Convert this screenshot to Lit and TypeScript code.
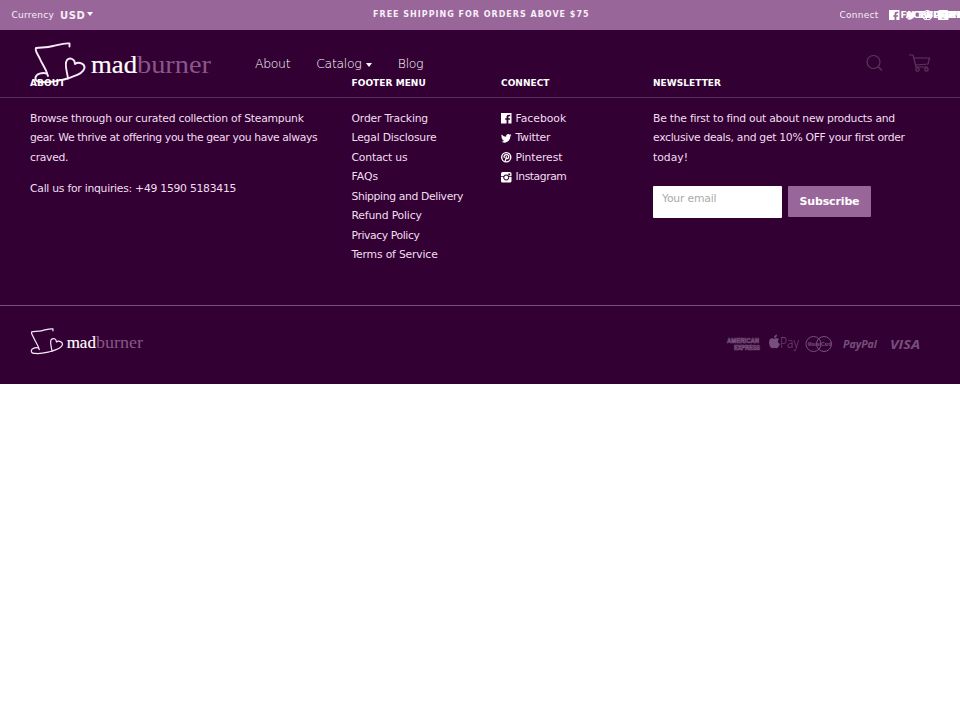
import { LitElement, html, css, svg } from "lit";
import { customElement } from "lit/decorators.js";
import { styleMap } from "lit/directives/style-map.js";

const facebook = svg`<path fill-rule="evenodd" d="M0 0h20v20h-6v-7h3l.4-3.2H14V8c0-1 .5-1.6 1.6-1.6h2V3.3h-2.7C12 3.3 10.600 5 10.600 7.500v2.300H8V13h2.600v7H0z"/>`;
const twitter = svg`<path d="M20 3.900c-.7.300-1.500.500-2.300.600.800-.5 1.500-1.300 1.800-2.200-.8.500-1.700.8-2.600 1A4.100 4.100 0 0 0 9.900 7 11.600 11.600 0 0 1 1.400 2.700a4.100 4.100 0 0 0 1.300 5.500c-.7 0-1.300-.2-1.900-.5 0 2 1.400 3.700 3.300 4.100-.6.200-1.200.2-1.900.1.500 1.600 2 2.800 3.800 2.800A8.200 8.200 0 0 1 0 16.400 11.600 11.600 0 0 0 17.900 6c.8-.6 1.500-1.300 2.100-2.100z"/>`;
const pinterest = svg`<circle cx="10" cy="10" r="8.700" fill="none" stroke="currentColor" stroke-width="2.600"/><path d="M6.600 11.300C4.500 8 6.600 4.800 10.300 4.800c3.500 0 5 2.600 4.200 5.200-.8 2.900-3.400 3.300-4.400 2M10.500 8l-2.600 10" fill="none" stroke="currentColor" stroke-width="2.400"/>`;
const instagram = svg`<path fill-rule="evenodd" d="M3 0h14a3 3 0 0 1 3 3v4.500h-5a6 6 0 0 0-10 0H0V3a3 3 0 0 1 3-3zM14 3v3h3.500V3zM0 9h4.500a5.700 5.700 0 1 0 11 0H20v8a3 3 0 0 1-3 3H3a3 3 0 0 1-3-3z"/><circle cx="10" cy="10.500" r="3.700"/>`;

// Each line of copy carries its own tracking, in pixels.
type Line = [text: string, tracking: number];

const social: { line: Line; icon: unknown }[] = [
  { line: ["Facebook", 0], icon: facebook },
  { line: ["Twitter", -0.2], icon: twitter },
  { line: ["Pinterest", -0.1], icon: pinterest },
  { line: ["Instagram", -0.45], icon: instagram },
];
const links: Line[] = [
  ["Order Tracking", -0.18],
  ["Legal Disclosure", -0.2],
  ["Contact us", -0.2],
  ["FAQs", 0],
  ["Shipping and Delivery", -0.36],
  ["Refund Policy", -0.18],
  ["Privacy Policy", -0.4],
  ["Terms of Service", -0.18],
];
const about: Line[] = [
  ["Browse through our curated collection of Steampunk", -0.24],
  ["gear. We thrive at offering you the gear you have always", -0.37],
  ["craved.", -0.3],
];
const newsletter: Line[] = [
  ["Be the first to find out about new products and", -0.25],
  ["exclusive deals, and get 10% OFF your first order", -0.31],
  ["today!", 0],
];

@customElement("brand-logo")
export class BrandLogo extends LitElement {
  static styles = css`
    :host { display: block; }
    svg { display: block; width: 100%; height: 100%; }
    .line { fill: none; stroke: #f8eaf8; stroke-width: 1.900; stroke-linecap: round; stroke-linejoin: round; }
    .word { font-family: "Liberation Serif", serif; font-size: 26px; }
    .mad { fill: #fff; stroke: #fff; stroke-width: 0.200; }
    .burner { fill: #895789; }
  `;
  render() {
    return html`<svg viewBox="0 0 178 44">
      <path class="line" d="M35.500 4.500V1.500C30 .8 24 3 19 4C12 6 7 5 2 6C0.500 9 4 12 6 17C8 22 12 26 14 34" />
      <path class="line" d="M13 31.500C8 30 2 32 1.500 35.500C1 39 4 40 8 40C18 41 26 38 34 36.500" />
      <path class="line" d="M34 36.500C33 29 30 22 33 18C36 15 41 17 41 22C45 19 51 22 50.500 26C49 32 42 33 34 36.500Z" />
      <text class="word mad" x="57" y="31" textLength="46" lengthAdjust="spacingAndGlyphs">mad</text>
      <text class="word burner" x="103" y="31" textLength="74" lengthAdjust="spacingAndGlyphs">burner</text>
    </svg>`;
  }
}

@customElement("app-root")
export class AppRoot extends LitElement {
  static styles = css`
    :host { display: block; font-family: "DejaVu Sans", sans-serif; color: #f0dff0; overflow: hidden; background: #fff; }
    * { box-sizing: border-box; }
    p, h4, ul { margin: 0; padding: 0; list-style: none; }
    .topbar { height: 30px; background: #996699; display: grid; grid-template-columns: 373px 1fr 120.500px; align-items: center; font-size: 9px; color: #f8eef8; white-space: nowrap; }
    .currency { display: flex; align-items: center; padding-left: 11.500px; letter-spacing: 0.250px; }
    .usd { font-weight: bold; font-size: 10px; margin-left: 6px; letter-spacing: 0.500px; }
    .caret { width: 0; height: 0; border: 3.500px solid transparent; border-top: 4px solid #fff; border-bottom: 0; margin: -2px 0 0 2px; }
    .promo { font-weight: bold; font-size: 8px; letter-spacing: 1px; margin-top: -1px; }
    .connect { display: flex; align-items: center; overflow: hidden; letter-spacing: 0.250px; }
    .tiny { display: flex; margin-left: 11px; }
    .tiny li { flex: 0 0 16.300px; width: 16.300px; display: flex; align-items: center; gap: 0.500px; font-weight: bold; color: #fff; text-transform: uppercase; }
    .icon { width: 10.500px; height: 10.500px; fill: currentColor; flex: none; overflow: visible; }
    .header { height: 68px; background: #330033; border-bottom: 1px solid #573057; display: flex; align-items: center; padding: 0 29px 0 34px; }
    .brand { width: 178px; height: 44px; }
    .nav { display: flex; margin-left: 43px; font-size: 12.500px; letter-spacing: -0.350px; font-weight: 200; color: #fff; }
    .nav li { display: flex; align-items: center; margin-right: 26px; }
    .nav .caret { border-width: 4px 3px 0; margin: 3px 0 0 4.500px; }
    .tools { display: flex; margin-left: auto; gap: 26px; margin-top: -1px; }
    .tool { fill: none; stroke: #5a365a; stroke-width: 1.200; }
    .footer { background: #330033; height: 286px; }
    .columns { display: grid; grid-template-columns: 321.500px 149.500px 152px 1fr; padding-left: 30px; height: 208px; border-bottom: 1px solid #76507a; font-size: 10.800px; line-height: 19.500px; }
    .col { margin-top: -24px; white-space: nowrap; }
    .col h4 { font-size: 9px; font-weight: bold; color: #fff; margin-bottom: 15px; letter-spacing: 0.050px; }
    .copy { display: block; }
    .phone { margin-top: 12px; }
    .social li { display: flex; align-items: center; gap: 4px; }
    .social .icon { color: #fff; }
    .form { display: flex; align-items: flex-start; gap: 6px; margin-top: 19px; line-height: normal; }
    .email { width: 129px; height: 32px; background: #fff; color: #aaa; border-radius: 1px; padding: 6px 9px; letter-spacing: -0.200px; }
    .button { width: 83px; height: 30.500px; background: #996699; color: #fff; border-radius: 1px; font-weight: bold; font-size: 11px; letter-spacing: -0.150px; display: grid; place-items: center; }
    .base { display: flex; justify-content: space-between; align-items: flex-start; padding: 22px 40px 0 30px; }
    .small { width: 114px; height: 28px; }
    .cards { width: 196px; height: 20px; margin-top: 6px; fill: #76507a; overflow: visible; }
    .ring { fill: none; stroke: #76507a; }
    .pay { font: italic bold 11px "Open Sans", sans-serif; }
    .visa { font: italic bold 13px "Open Sans", sans-serif; }
    .amex { font: bold 6.500px "Liberation Sans", sans-serif; fill: none; stroke: #76507a; stroke-width: 0.700; }
    .master { font: bold 5px "Liberation Sans", sans-serif; }
    .apple { font: 300 15px "Open Sans", sans-serif; }
  `;
  icon(i: unknown) {
    return html`<svg class="icon" viewBox="0 0 20 20">${i}</svg>`;
  }
  copy([text, tracking]: Line) {
    return html`<span class="copy" style=${styleMap({ letterSpacing: `${tracking}px` })}>${text}</span>`;
  }
  render() {
    return html`
      <div class="topbar">
        <div class="currency"><span>Currency</span><span class="usd">USD</span><i class="caret"></i></div>
        <div class="promo">FREE SHIPPING FOR ORDERS ABOVE $75</div>
        <div class="connect"><span>Connect</span><ul class="tiny">${social.map((s) => html`<li>${this.icon(s.icon)}<span>${s.line[0]}</span></li>`)}</ul></div>
      </div>
      <header class="header">
        <brand-logo class="brand"></brand-logo>
        <ul class="nav"><li>About</li><li>Catalog<i class="caret"></i></li><li>Blog</li></ul>
        <div class="tools">
          <svg class="tool" width="18" height="18"><circle cx="8.500" cy="8" r="6.500" /><path d="M13 12.500L17 16.500" /></svg>
          <svg class="tool" width="22" height="18"><path d="M0 1H4L7 13H19M4.500 4H20.500L19 10L6.500 11" /><circle cx="8.500" cy="15.500" r="1.700" /><circle cx="17.500" cy="15.500" r="1.700" /></svg>
        </div>
      </header>
      <footer class="footer">
        <div class="columns">
          <div class="col"><h4>ABOUT</h4>
            <p>${about.map((l) => this.copy(l))}</p>
            <p class="phone">${this.copy(["Call us for inquiries: +49 1590 5183415", -0.26])}</p></div>
          <div class="col"><h4>FOOTER MENU</h4><ul>${links.map((l) => html`<li>${this.copy(l)}</li>`)}</ul></div>
          <div class="col"><h4>CONNECT</h4><ul class="social">${social.map((s) => html`<li>${this.icon(s.icon)}${this.copy(s.line)}</li>`)}</ul></div>
          <div class="col"><h4>NEWSLETTER</h4>
            <p>${newsletter.map((l) => this.copy(l))}</p>
            <div class="form"><div class="email">Your email</div><div class="button">Subscribe</div></div></div>
        </div>
        <div class="base">
          <brand-logo class="small"></brand-logo>
          <svg class="cards" viewBox="0 0 196 20">
            <text class="amex" x="3" y="9" textLength="32" lengthAdjust="spacingAndGlyphs">AMERICAN</text>
            <text class="amex" x="10" y="15.800" textLength="26" lengthAdjust="spacingAndGlyphs">EXPRESS</text>
            <path d="M50 5C51 4 54 4 55 5C53 7 54 9 56 10C54 15 52 14.500 50.500 13.800C48 15 46.500 14 45.500 11C44 6 47 3 50 5ZM50 4C50 2 51 1 53 .5C53 2.500 52 4 50 4Z" />
            <text class="apple" x="56" y="14" textLength="19" lengthAdjust="spacingAndGlyphs">Pay</text>
            <circle class="ring" cx="89.500" cy="10" r="7.500" /><circle class="ring" cx="100" cy="10" r="7.500" />
            <text class="master" x="84" y="12" textLength="23" lengthAdjust="spacingAndGlyphs">MasterCard</text>
            <text class="pay" x="119" y="14" textLength="34" lengthAdjust="spacingAndGlyphs">PayPal</text>
            <text class="visa" x="166" y="15" textLength="30" lengthAdjust="spacingAndGlyphs">VISA</text>
          </svg>
        </div>
      </footer>`;
  }
}
